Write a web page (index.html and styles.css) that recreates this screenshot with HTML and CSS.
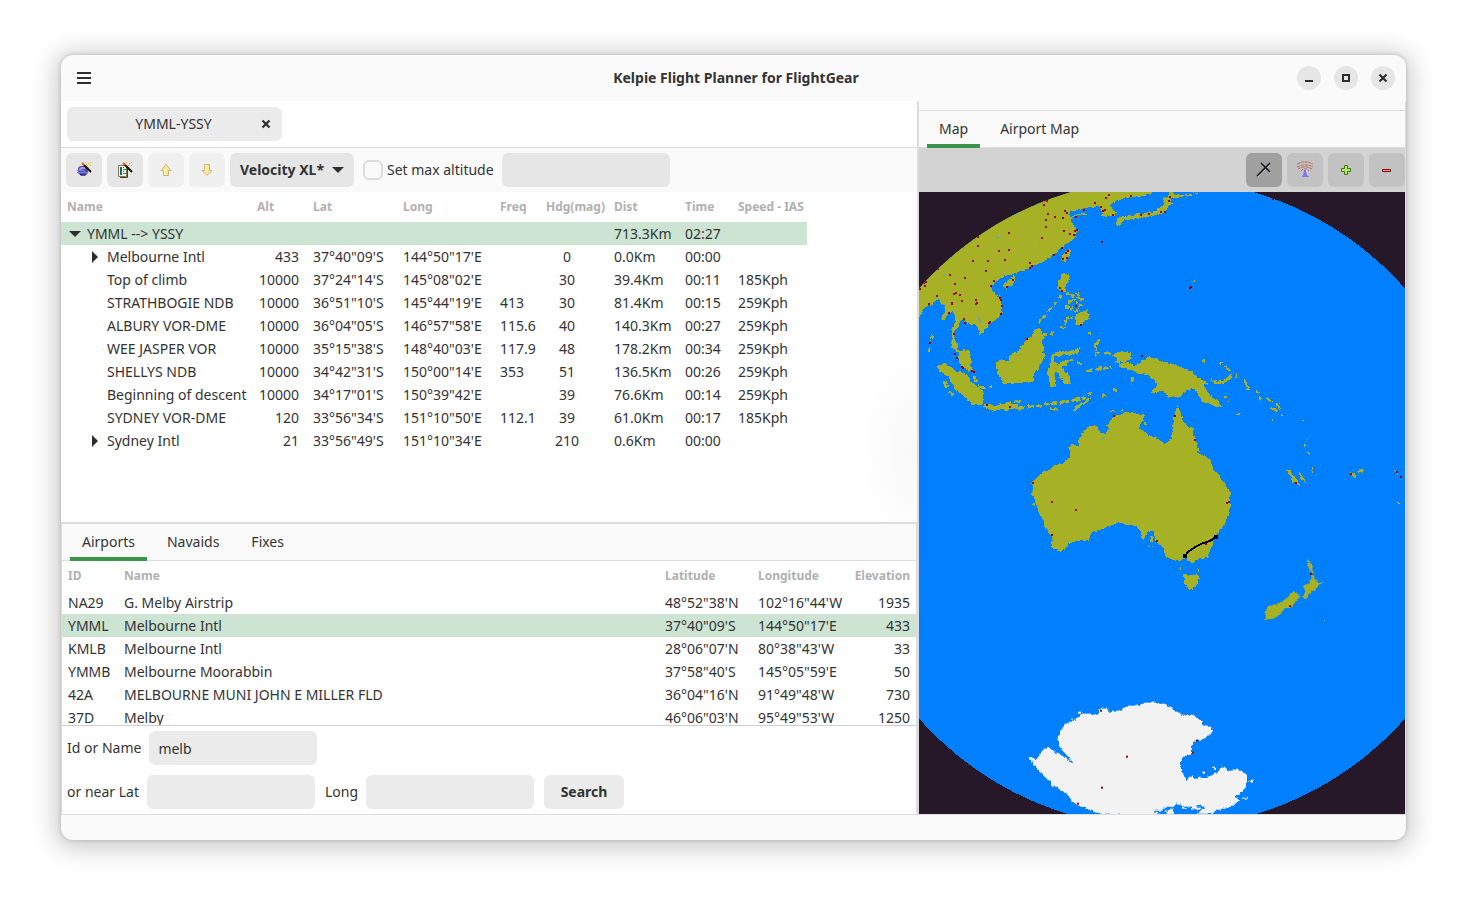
FILE: index.html
```html
<!DOCTYPE html>
<html lang="en">
<head>
<meta charset="utf-8">
<title>Kelpie Flight Planner for FlightGear</title>
<link rel="stylesheet" href="styles.css">
</head>
<body>
<div class="window">
  <header class="titlebar">
    <button class="menu" aria-label="Menu"><svg width="14" height="12" viewBox="0 0 14 12"><path d="M0 1h14M0 6h14M0 11h14" stroke="#2e2e2e" stroke-width="2"/></svg></button>
    <h1>Kelpie Flight Planner for FlightGear</h1>
    <div class="controls">
      <button aria-label="Minimize"><svg width="10" height="10" viewBox="0 0 10 10"><path d="M1 8h8" stroke="#2e2e2e" stroke-width="2"/></svg></button>
      <button aria-label="Maximize"><svg width="10" height="10" viewBox="0 0 10 10"><path d="M2 2h6v6H2z" fill="none" stroke="#2e2e2e" stroke-width="2"/></svg></button>
      <button aria-label="Close"><svg width="10" height="10" viewBox="0 0 10 10"><path d="M1.500 1.500l7 7M8.500 1.500l-7 7" stroke="#2e2e2e" stroke-width="2.200"/></svg></button>
    </div>
  </header>

  <main class="panes">
    <section class="left">
      <div class="plans">
        <div class="plan"><span>YMML-YSSY</span><button aria-label="Close plan"><svg width="10" height="10" viewBox="0 0 10 10"><path d="M1.500 1.500l7 7M8.500 1.500l-7 7" stroke="#2e2e2e" stroke-width="2.200"/></svg></button></div>
      </div>
      <div class="toolbar">
        <button class="tool" aria-label="Route wizard"><svg width="16" height="16" viewBox="0 0 16 16"><path d="M4 4h5l3 3v4l-3 3H5l-3-3V6z" fill="#5850a8"/><path d="M3 7l2-2h4v2H6L4 9z" fill="#a59de0"/><path d="M1 8.500h8M1 10.500h11" stroke="#6d83ee"/><path d="M4 12.500h6" stroke="#33276e"/><path d="M6 1l2 2" stroke="#e05820" stroke-width="2"/><path d="M8 3l7 7" stroke="#111" stroke-width="2"/><path d="M9 .5h1M12 1.500h1M14 .5h1M11 3.500h1M14 3.500h1M10 2.500h1M12 5.500h1" stroke="#edb818"/></svg></button>
        <button class="tool" aria-label="Plan wizard"><svg width="16" height="16" viewBox="0 0 16 16"><path d="M1.500 3.500h8v11h-8z" fill="#f3f5e6" stroke="#847951"/><path d="M10.500 5v10.500H3" fill="none" stroke="#3c3d35"/><path d="M4 5v8" stroke="#08736d" stroke-width="2"/><path d="M6 5.500h1M6 7.500h3M6 9.500h1M6 11.500h3" stroke="#148c86"/><path d="M6 1l2 2" stroke="#e05820" stroke-width="2"/><path d="M8 3l7 7" stroke="#111" stroke-width="2"/><path d="M9 .5h1M12 1.500h1M14 .5h1M11 3.500h1M14 3.500h1M12 5.500h1" stroke="#e8a52b"/></svg></button>
        <button class="tool" aria-label="Move up" disabled><svg width="16" height="16" viewBox="0 0 16 16"><path d="M8 2.500L13 8.500H10.500V13.500H5.500V8.500H3z" fill="#fbe98f" stroke="#cdb07c"/><path d="M7 7v6" stroke="#fffbe0"/></svg></button>
        <button class="tool" aria-label="Move down" disabled><svg width="16" height="16" viewBox="0 0 16 16"><path d="M8 13.500L3 8.500H5.500V2.500H10.500V8.500H13z" fill="#fbe98f" stroke="#cdb07c"/><path d="M7 3v6" stroke="#fffbe0"/></svg></button>
        <button class="combo">Velocity XL*<svg width="12" height="6" viewBox="0 0 12 6"><path d="M0 0h12L6 6z" fill="#2e2e2e"/></svg></button>
        <label class="check"><input type="checkbox">Set max altitude</label>
        <input class="entry" type="text" aria-label="Maximum altitude">
      </div>
      <div class="tree">
        <table class="route">
          <colgroup><col class="c-name"><col class="c-alt"><col class="c-lat"><col class="c-long"><col class="c-freq"><col class="c-hdg"><col class="c-dist"><col class="c-time"><col class="c-speed"></colgroup>
          <thead><tr><th>Name</th><th>Alt</th><th>Lat</th><th>Long</th><th>Freq</th><th>Hdg(mag)</th><th>Dist</th><th>Time</th><th>Speed - IAS</th></tr></thead>
          <tbody>
            <tr class="selected"><td><div class="node"><svg width="12" height="12" viewBox="0 0 12 12"><path d="M0 3h12L6 9z" fill="#2e2e2e"/></svg>YMML --&gt; YSSY</div></td><td></td><td></td><td></td><td></td><td></td><td>713.3Km</td><td>02:27</td><td></td></tr>
            <tr><td><div class="node child"><svg width="12" height="12" viewBox="0 0 12 12"><path d="M3 0v12l6-6z" fill="#2e2e2e"/></svg>Melbourne Intl</div></td><td>433</td><td>37°40"09'S</td><td>144°50"17'E</td><td></td><td>0</td><td>0.0Km</td><td>00:00</td><td></td></tr>
            <tr><td><div class="leaf">Top of climb</div></td><td>10000</td><td>37°24"14'S</td><td>145°08"02'E</td><td></td><td>30</td><td>39.4Km</td><td>00:11</td><td>185Kph</td></tr>
            <tr><td><div class="leaf">STRATHBOGIE NDB</div></td><td>10000</td><td>36°51"10'S</td><td>145°44"19'E</td><td>413</td><td>30</td><td>81.4Km</td><td>00:15</td><td>259Kph</td></tr>
            <tr><td><div class="leaf">ALBURY VOR-DME</div></td><td>10000</td><td>36°04"05'S</td><td>146°57"58'E</td><td>115.6</td><td>40</td><td>140.3Km</td><td>00:27</td><td>259Kph</td></tr>
            <tr><td><div class="leaf">WEE JASPER VOR</div></td><td>10000</td><td>35°15"38'S</td><td>148°40"03'E</td><td>117.9</td><td>48</td><td>178.2Km</td><td>00:34</td><td>259Kph</td></tr>
            <tr><td><div class="leaf">SHELLYS NDB</div></td><td>10000</td><td>34°42"31'S</td><td>150°00"14'E</td><td>353</td><td>51</td><td>136.5Km</td><td>00:26</td><td>259Kph</td></tr>
            <tr><td><div class="leaf">Beginning of descent</div></td><td>10000</td><td>34°17"01'S</td><td>150°39"42'E</td><td></td><td>39</td><td>76.6Km</td><td>00:14</td><td>259Kph</td></tr>
            <tr><td><div class="leaf">SYDNEY VOR-DME</div></td><td>120</td><td>33°56"34'S</td><td>151°10"50'E</td><td>112.1</td><td>39</td><td>61.0Km</td><td>00:17</td><td>185Kph</td></tr>
            <tr><td><div class="node child"><svg width="12" height="12" viewBox="0 0 12 12"><path d="M3 0v12l6-6z" fill="#2e2e2e"/></svg>Sydney Intl</div></td><td>21</td><td>33°56"49'S</td><td>151°10"34'E</td><td></td><td>210</td><td>0.6Km</td><td>00:00</td><td></td></tr>
          </tbody>
        </table>
      </div>
      <div class="finder">
        <nav class="tabs"><button class="tab active">Airports</button><button class="tab">Navaids</button><button class="tab">Fixes</button></nav>
        <div class="results">
          <table class="airports">
            <colgroup><col class="a-id"><col><col class="a-lat"><col class="a-long"><col class="a-elev"></colgroup>
            <thead><tr><th>ID</th><th>Name</th><th>Latitude</th><th>Longitude</th><th>Elevation</th></tr></thead>
            <tbody>
              <tr><td>NA29</td><td>G. Melby Airstrip</td><td>48°52"38'N</td><td>102°16"44'W</td><td>1935</td></tr>
              <tr class="selected"><td>YMML</td><td>Melbourne Intl</td><td>37°40"09'S</td><td>144°50"17'E</td><td>433</td></tr>
              <tr><td>KMLB</td><td>Melbourne Intl</td><td>28°06"07'N</td><td>80°38"43'W</td><td>33</td></tr>
              <tr><td>YMMB</td><td>Melbourne Moorabbin</td><td>37°58"40'S</td><td>145°05"59'E</td><td>50</td></tr>
              <tr><td>42A</td><td>MELBOURNE MUNI JOHN E MILLER FLD</td><td>36°04"16'N</td><td>91°49"48'W</td><td>730</td></tr>
              <tr><td>37D</td><td>Melby</td><td>46°06"03'N</td><td>95°49"53'W</td><td>1250</td></tr>
            </tbody>
          </table>
        </div>
        <form class="search">
          <div class="line"><label for="ident">Id or Name</label><input class="entry" id="ident" type="text" value="melb"></div>
          <div class="line"><label for="lat">or near Lat</label><input class="entry" id="lat" type="text"><label for="long">Long</label><input class="entry" id="long" type="text"><button class="go" type="button">Search</button></div>
        </form>
      </div>
    </section>

    <section class="right">
      <nav class="tabs"><button class="tab active">Map</button><button class="tab">Airport Map</button></nav>
      <div class="maptools">
        <button class="tool on" aria-label="Show airports"><svg width="16" height="16" viewBox="0 0 16 16"><path d="M2 15L14 3M6 2l9 9" stroke="#c8c2a4" stroke-width="1"/><path d="M1 14L14 1M5 1l9 9" stroke="#10101c" stroke-width="1.500"/></svg></button>
        <button class="tool" aria-label="Show navaids"><svg width="18" height="18" viewBox="0 0 18 18"><path d="M8 8h3l1 5 3 3H4l3-3z" fill="#d9cff5"/><path d="M8 9h2l1 5 3 2H5l2-2z" fill="#7b7be8"/><path d="M1 3l5-2h6l5 2M1 6l5-2h6l5 2M2 8l4-2h6l4 2M5 10l2-2h4l2 2" fill="none" stroke="#b5674e" stroke-dasharray="3 1"/></svg></button>
        <button class="tool" aria-label="Zoom in"><svg width="16" height="16" viewBox="0 0 16 16"><path d="M6.500 3.500h3v3h3v3h-3v3h-3v-3h-3v-3h3z" fill="#b8e878" stroke="#3d7a05"/></svg></button>
        <button class="tool" aria-label="Zoom out"><svg width="16" height="16" viewBox="0 0 16 16"><path d="M3.500 7.500h8v2h-8z" fill="#e89a9a" stroke="#8d0707"/></svg></button>
      </div>
      <svg class="map" viewBox="0 0 486 622" preserveAspectRatio="xMidYMid slice" role="img" aria-label="World map with route from Melbourne to Sydney" shape-rendering="crispEdges">
        <defs>
          <clipPath id="globe"><circle cx="243" cy="311.500" r="324.500"/></clipPath>
          <filter id="coast" x="0" y="0" width="486" height="622" filterUnits="userSpaceOnUse"><feTurbulence type="fractalNoise" baseFrequency=".25" numOctaves="2" seed="4"/><feDisplacementMap in="SourceGraphic" scale="4" xChannelSelector="R" yChannelSelector="G"/></filter>
        </defs>
        <rect width="486" height="622" fill="#261829"/>
        <circle cx="243" cy="311.500" r="324.500" fill="#0080ff"/>
        <g clip-path="url(#globe)">
          <g filter="url(#coast)">
            <g transform="translate(-4 -2) scale(.33333)" fill="#a6b125">
              <path d="M-30 390L12 380 20 370 28 356 40 346 50 344 62 336 70 326 74 332 76 345 84 340 88 350 90 364 84 372 78 384 82 392 94 382 100 372 112 366 118 372 120 385 118 400 112 420 112 440 108 455 108 472 120 480 132 490 130 500 134 520 150 534 166 543 172 541 168 528 168 500 164 484 146 478 130 480 130 462 122 454 116 440 118 425 130 410 136 392 146 388 152 396 165 402 180 402 186 412 194 420 192 434 204 424 216 412 222 400 240 392 256 378 262 360 260 340 254 322 240 310 232 300 230 290 240 276 258 264 276 256 294 252 330 238 350 228 380 218 400 206 420 192 440 175 456 160 474 146 480 136 488 122 480 110 474 96 466 94 470 84 490 76 512 74 508 68 492 70 480 76 466 78 456 72 465 64 480 62 500 58 520 52 556 52 562 60 560 76 568 80 600 78 602 66 590 52 584 46 600 38 620 28 640 22 680 20 708 10 712-20H-30z"/>
              <path d="M602 84L626 80 640 76 660 74 690 70 720 64 738 50 746 44 748 30 746 20 760 20 764 0 780 14 806 14 808 20 780 22 766 24 770 40 760 52 750 66 740 72 720 74 700 80 680 84 664 84 654 90 650 86 630 92 620 98 614 108 604 98z"/>
              <path d="M810 12h20v5h-20zM838 8h12v4h-12z"/>
              <path d="M64 530L80 522 96 522 106 532 130 546 158 552 168 576 186 588 204 602 204 640 194 648 174 644 156 628 138 612 120 598 106 574 90 552 72 544zM204 644L220 642 244 646 262 642 284 634 300 646 320 648 332 654 318 660 300 656 270 660 250 660 230 664 216 660z"/>
              <path d="M336 650h20M362 648h16M386 644h16M406 642l20-4M432 640l30-6M470 632l24-6M500 626l12-6M518 614l12-6M560 616h14M598 604l8-8M404 656l24 3M300 636l20-4M192 590l20 4M224 592l10-3M90 576l8 16M102 604l16 12M178 560l4 16" stroke="#a6b125" stroke-width="8"/>
              <path d="M470 664L482 648 510 630 534 618 516 636 486 658zM246 514L262 510 280 514 284 496 300 488 310 482 320 468 334 450 350 438 356 418 376 414 382 428 402 432 388 442 380 454 386 470 382 488 394 496 376 522 372 538 358 550 356 574 330 580 300 578 264 582 256 560 246 546 242 530z"/>
              <path d="M410 500L420 486 450 484 480 482 496 468 490 488 470 494 430 497 418 502 416 514 432 524 450 510 470 508 456 524 442 532 444 540 462 558 468 582 452 582 438 566 430 552 424 544 420 556 422 590 406 590 402 560 394 556 400 534 408 516z"/>
              <path d="M436 254L450 250 466 258 464 272 452 284 450 302 440 306 426 298 426 286 434 270zM482 376L500 366 518 360 524 386 508 394 500 408 482 404 480 390zM442 196L458 180 470 176 464 196 452 212 440 212zM266 286L280 270 292 266 290 256 298 256 300 276 282 292 270 294z"/>
              <path d="M370 400l8-14M384 384l12-14M400 364l12-14M416 346l8-10M454 310l14 8 14-4M430 320l12 4M488 308l4 20M462 336l16-8 10 12M452 350l22 8M494 326l14 2M490 350l10-6M478 366l14-8M452 386l20-6M452 392l-4 18M408 430l10-2M436 414h10" fill="none" stroke="#a6b125" stroke-width="8" stroke-dasharray="12 3"/>
              <path d="M552 448l-10 24 2 28M538 464h12M544 490h12M486 520h22M514 542h18M544 536h20l24-4M568 490h24M654 562l-4 22M600 516h14M52 432l-4 20M42 470v20M524 426v10" fill="none" stroke="#a6b125" stroke-width="7" stroke-dasharray="16 4"/>
              <path d="M594 498L604 488 622 484 646 488 650 504 632 516 612 514zM612 520L640 516 660 526 676 518 682 510 700 502 720 506 760 518 800 532 830 546 846 560 860 570 878 580 866 588 878 604 890 622 904 630 922 650 900 650 880 640 866 638 852 622 846 604 830 598 810 600 800 612 782 622 762 620 750 606 740 602 720 608 708 608 716 596 724 588 720 572 700 556 676 550 664 546 640 536 612 532z"/>
              <path d="M888 568L904 572 926 570 942 554 952 550 952 564 936 576 918 584 898 582zM960 550h6v14h-6zM988 570l20 28-8 2-12-20z"/>
              <path d="M916 522h6M928 528l20 14M1022 602l10 10M1032 622l8 10M1054 622l16 14M1068 654l18 6M1086 640l10 18M1094 670l10 8M1162 692h4M1168 762v12M1180 750v4M1176 790l10-2M1192 832l4 16M1154 852l16 24M860 514h10M932 618v6M940 632h2M956 656h2M966 672h10M838 274h2M1047 403h2M1074 688h3M1450 940h2" fill="none" stroke="#a6b125" stroke-width="6"/>
              <path d="M1116 840l8 0 16 24 14 18-4 4-16-12zM1308 850h12l4 12-10 2zM1326 844l8-4h12v4l-16 4zM1312 876h6M1354 862h2M1440 838l12 14-2 2-12-12z"/>
            </g>
            <g transform="translate(91 203) scale(.33333)" fill="#a6b125">
              <path d="M66 262L84 244 98 230 116 226 136 210 158 206 174 192 180 180 178 158 188 142 194 154 208 148 202 138 214 124 220 108 234 100 246 92 264 98 270 114 284 116 294 106 292 92 304 76 312 62 336 60 344 50 370 54 392 56 408 60 398 76 392 94 386 100 404 110 426 126 446 132 458 142 474 144 482 132 488 104 488 70 496 56 502 30 512 52 520 84 534 92 548 100 552 126 562 148 566 174 586 186 600 194 608 214 614 230 628 236 630 250 646 270 660 290 662 336 654 360 644 388 632 404 618 424 608 442 600 466 594 488 568 490 554 500 538 502 530 492 520 492 506 500 484 492 466 484 458 456 444 446 436 436 432 420 430 402 412 414 404 436 394 430 394 412 376 394 350 390 334 384 300 390 280 402 258 406 240 420 234 434 200 438 182 442 164 464 144 468 122 456 126 430 118 414 106 394 102 376 86 352 82 336 72 306 64 298z"/>
              <path d="M300 48l16-2v6h-16zM334 44l6-2v8zM572 0L602 4 636 34 610 26 586 18zM474 0h44l-4 6h-36zM400 82h8v6h-8zM448 124h6M64 324l8-4 6 14-10-4zM420 424l10 2-2 16-8 0zM416 450h18v4h-18zM510 516h4v8h-4zM564 522h4v8h-4zM518 534L536 540 560 538 568 544 560 570 548 584 534 582 524 566z"/>
            </g>
            <g transform="translate(321 348) scale(.33333)" fill="#a6b125">
              <path d="M202 54L210 66 216 80 220 98 214 98 208 84zM214 106L222 104 230 126 248 126 238 138 226 150 212 158 196 178 186 174 196 156 188 140 204 134 212 118zM70 216L88 200 108 192 134 182 146 170 160 154 172 158 178 172 162 190 152 202 132 208 120 224 100 238 78 234zM76 236h8v4h-8zM250 242h5v4h-5z"/>
            </g>
            <g transform="translate(91 498) scale(.33333)" fill="#f2f2f2">
              <path d="M60 200L78 210 98 182 114 172 128 182 144 190 160 200 188 218 180 206 154 180 148 166 142 148 150 122 166 102 186 94 206 80 220 70 264 70 274 54 290 54 300 68 330 60 360 46 386 48 404 38 436 38 462 42 484 52 496 66 524 76 548 72 560 82 574 92 578 106 602 110 612 128 594 138 574 148 556 152 548 164 542 194 520 200 510 214 512 240 526 262 530 272 544 258 552 266 570 264 590 262 606 256 624 246 630 236 644 230 656 242 684 238 696 244 712 256 708 290 696 306 672 324 690 330 674 342 650 354 620 360 604 372 558 372 572 364 586 352 570 348 530 350 500 342 490 350 466 352 458 360 430 364 452 374 276 374 240 360 204 346 188 334 170 312 144 294 124 286 122 272 104 262 82 238 76 226 62 212z"/>
              <path d="M604 236l10-6v8zM716 274l18-6-6 10zM690 326l26-6-6 8zM468 362l20-6 4 14h-26zM516 350l12 2v4h-12zM544 348l28 6v6h-26zM404 356h10v6zM184 86h6v4h-6zM204 66h8v6h-8zM576 246h6v4h-6z"/>
            </g>
          </g>
          <path d="M77 45h3M110 45h1M24 83h2M59 125l3 6M183 247l3-2M120 50h1M158 4h1" stroke="#4e9de8" stroke-width="1"/>
          <g fill="none" stroke="#a30000" stroke-width="6" stroke-linecap="square">
            <g transform="translate(-4 -2) scale(.33333)">
              <path d="M582 14h.1M573 23h.1M648 17h.1M540 38h.1M396 32h.1M387 44h.1M558 50h.1M564 62h.1M570 59h.1M594 74h.1M507 59h.1M450 62h.1M456 68h.1M399 71h.1M393 89h.1M420 80h.1M444 83h.1M483 80h.1M393 110h.1M447 122h.1M480 122h.1M486 119h.1M465 131h.1M477 134h.1M282 128h.1M381 143h.1M189 140h.1M189 167h.1M252 182h.1M282 179h.1M441 173h.1M453 188h.1M460 182h.1M444 206h.1M456 203h.1M417 194h.1M270 209h.1M219 212h.1M174 212h.1M213 242h.1M345 218h.1M345 233h.1M352 229h.1M69 236h.1M105 254h.1M150 263h.1M28 278h.1M33 275h.1M30 287h.1M14 296h.1M120 281h.1M237 272h.1M228 287h.1M294 269h.1M276 290h.1M435 293h.1M441 302h.1M117 311h.1M123 308h.1M135 314h.1M141 332h.1M111 338h.1M111 342h.1M66 317h.1M42 341h.1M183 329h.1M183 342h.1M186 338h.1M255 323h.1M258 329h.1M261 347h.1M258 371h.1M483 347h.1M102 368h.1M147 386h.1M150 398h.1M222 398h.1M225 395h.1M498 404h.1M117 431h.1M336 446h.1M45 458h.1M120 491h.1M126 503h.1M141 530h.1M144 534h.1M172 543h.1M176 545h.1M216 644h.1M285 650h.1M597 677h.1M681 497h.1M561 155h.1M678 74h.1M702 71h.1M738 65h.1M750 65h.1M765 20h.1M762 32h.1M1074 26h.1M825 293h.1M828 290h.1M1308 851h.1M1446 845h.1M1458 860h.1M1143 878h.1"/>
            </g>
            <g transform="translate(91 203) scale(.33333)"><path d="M312 62h.1M495 62h.1M555 134h.1M69 263h.1M126 320h.1M198 344h.1M126 419h.1M441 437h.1M651 323h.1M657 320h.1M588 446h.1"/></g>
            <g transform="translate(321 348) scale(.33333)"><path d="M213 101h.1M150 197h.1"/></g>
            <g transform="translate(91 498) scale(.33333)"><path d="M273 62h.1M561 152h.1M549 188h.1M351 200h.1M276 293h.1M204 341h.1"/></g>
          </g>
        </g>
        <path d="M266 364L269 360 273 357 278 354 284 351 291 349 297 345" fill="none" stroke="#000" stroke-width="2"/>
        <path d="M264 362h4v4h-4zM295 343h4v4h-4z"/>
      </svg>
    </section>
  </main>
  <footer class="status"></footer>
</div>
</body>
</html>
```
FILE: styles.css
```css
* { box-sizing: border-box; }
body {
  margin: 0;
  height: 100vh;
  padding: 55px 61px 67px;
  background: #fff;
  color: #333;
  font: 14px/22px "Noto Sans", "Open Sans", sans-serif;
}
button, input { font: inherit; color: inherit; border: 0; margin: 0; padding: 0; }
button { background: none; display: flex; align-items: center; justify-content: center; }
.window {
  height: 100%;
  display: flex;
  flex-direction: column;
  overflow: hidden;
  background: #fafafa;
  border-radius: 12px;
  box-shadow: 0 3px 24px 6px rgba(0, 0, 0, .2), 0 0 4px rgba(0, 0, 0, .2);
}
.titlebar {
  height: 46px;
  flex: none;
  display: grid;
  grid-template-columns: 1fr auto 1fr;
  align-items: center;
  padding: 0 11px 0 16px;
}
.titlebar h1 { margin: 0; font-size: 14px; font-weight: 700; }
.menu { width: 14px; height: 24px; }
.controls { display: flex; justify-content: flex-end; gap: 13px; }
.controls button { width: 24px; height: 24px; border-radius: 50%; background: #e6e6e6; }
.panes { flex: 1; min-height: 0; display: grid; grid-template-columns: minmax(0, 856fr) minmax(0, 489fr); }
.left { display: flex; flex-direction: column; min-height: 0; background: #fff; }
.plans { height: 47px; padding: 6px; border-bottom: 1px solid #dcdcdc; }
.plan {
  width: 215px;
  height: 34px;
  display: grid;
  grid-template-columns: 1fr 20px;
  align-items: center;
  padding: 0 6px 0 24px;
  border-radius: 6px;
  background: #ebebeb;
  text-align: center;
}
.plan button { height: 20px; }
.toolbar { height: 44px; display: flex; align-items: center; gap: 5px; padding: 0 5px; background: #fafafa; }
.tool { width: 36px; height: 34px; border-radius: 6px; background: #e6e6e6; }
.tool:disabled { background: #f0f0f0; }
.combo { width: 124px; height: 34px; gap: 8px; border-radius: 6px; background: #e6e6e6; font-weight: 700; }
.check { display: flex; align-items: center; gap: 4px; margin: 0 3px 0 4px; }
.check input { appearance: none; width: 20px; height: 20px; border: 2px solid #dcdcdc; border-radius: 6px; }
.entry { width: 168px; height: 34px; padding: 0 9px; border-radius: 6px; background: #ebebeb; }
.toolbar .entry { background: #e6e6e6; }
.tree {
  flex: 1;
  min-height: 0;
  overflow: hidden;
  background: radial-gradient(ellipse 60px 110px at 100% 260px, #f8f8f8, #fff);
}
table { border-collapse: collapse; table-layout: fixed; }
th { height: 30px; padding: 0 0 0 6px; text-align: left; font-size: 12px; line-height: 20px; color: #b0b0b0; white-space: nowrap; }
td { height: 23px; padding: 0 6px; line-height: 23px; white-space: nowrap; }
.selected { background: #cde4d2; }
.route { width: 746px; }
.c-name { width: 190px; }
.c-alt { width: 56px; }
.c-lat { width: 90px; }
.c-long { width: 97px; }
.c-freq { width: 46px; }
.c-hdg { width: 68px; }
.c-dist { width: 71px; }
.c-time { width: 53px; }
.c-speed { width: 75px; }
.route td:nth-child(2) { text-align: right; padding-right: 8px; }
.route td:nth-child(6) { text-align: center; padding-right: 20px; }
.node { display: flex; align-items: center; gap: 6px; padding-left: 2px; }
.child { padding-left: 22px; }
.leaf { padding-left: 40px; }
.finder { height: 292px; display: flex; flex-direction: column; border: solid #dcdcdc; border-width: 2px 1px 0; }
.tabs { height: 37px; flex: none; display: flex; gap: 8px; padding: 0 8px; background: #fafafa; border-bottom: 1px solid #dcdcdc; }
.tab { height: 37px; padding: 3px 12px 0; border-bottom: 4px solid transparent; }
.tab.active { border-color: #3a944a; }
.results { flex: 1; min-height: 0; overflow: hidden; border-bottom: 1px solid #d0d0d0; }
.airports { width: 100%; }
.a-id { width: 56px; }
.a-lat { width: 93px; }
.a-long { width: 100px; }
.a-elev { width: 64px; }
.airports td:last-child { text-align: right; }
.airports th:last-child { text-align: right; padding: 0 6px 0 0; }
.line { height: 44px; display: flex; align-items: center; gap: 8px; padding-left: 5px; }
.line .entry { margin-right: 2px; }
.go { width: 80px; height: 34px; border-radius: 6px; background: #ebebeb; font-weight: 700; }
.right { display: flex; flex-direction: column; min-height: 0; padding-top: 9px; border: solid #dcdcdc; border-width: 0 1px 0 2px; }
.right .tabs { height: 38px; border-top: 1px solid #dcdcdc; }
.maptools { height: 44px; flex: none; display: flex; justify-content: flex-end; align-items: center; gap: 5px; background: #d3d3d3; }
.maptools .tool { background: #c2c2c2; }
.maptools .on { background: #a0a0a0; }
.map { display: block; width: 100%; flex: 1; min-height: 0; }
.status { height: 26px; flex: none; border-top: 1px solid #dcdcdc; }
```
